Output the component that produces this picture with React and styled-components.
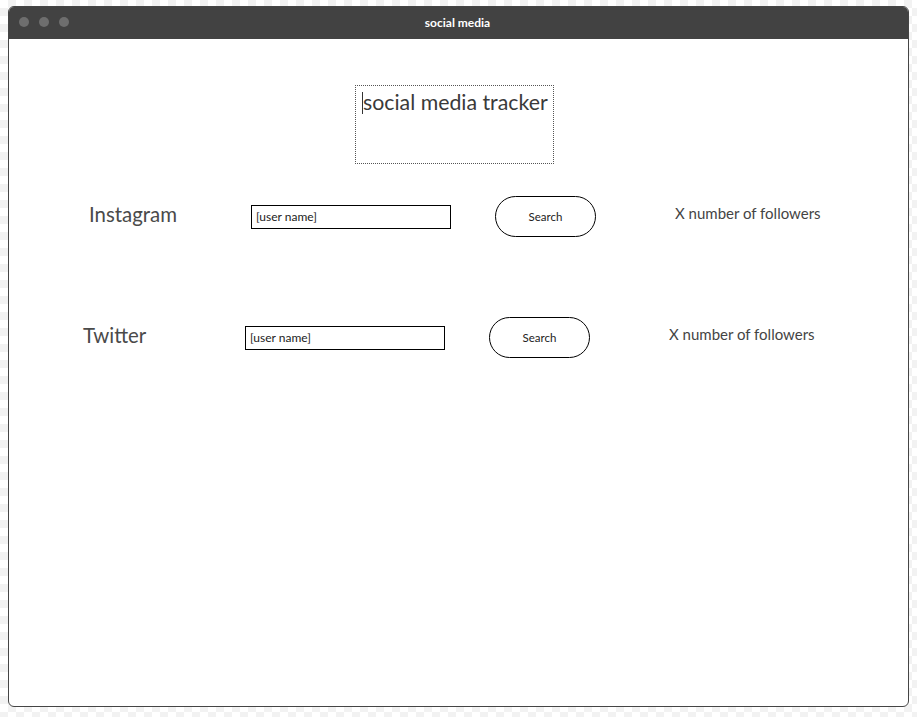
import React from 'react';
import styled, { createGlobalStyle } from 'styled-components';

const GlobalStyle = createGlobalStyle`
  html, body {
    margin: 0;
    padding: 0;
  }
  body {
    width: 917px;
    height: 717px;
    overflow: hidden;
    font-family: Lato, "Liberation Sans", sans-serif;
    background: repeating-conic-gradient(#f2f2f2 0% 25%, #ffffff 0% 50%) 0 0 / 16px 16px;
  }
`;

const Page = styled.div`
  padding: 6px 8px 10px 8px;
  box-sizing: border-box;
  height: 717px;
`;

const Window = styled.div`
  width: 901px;
  height: 701px;
  box-sizing: border-box;
  background: #fff;
  border: 1.5px solid #454545;
  border-radius: 6px;
  overflow: hidden;
  display: flex;
  flex-direction: column;
`;

const TitleBar = styled.div`
  height: 32px;
  flex-shrink: 0;
  background: #424242;
  position: relative;
  display: flex;
  align-items: center;
  justify-content: center;
`;

const Dots = styled.div`
  position: absolute;
  left: 10px;
  top: 10px;
  display: flex;
  gap: 10px;
`;

const Dot = styled.span`
  width: 10px;
  height: 10px;
  border-radius: 50%;
  background: #6e6e6e;
`;

const WindowTitle = styled.div`
  color: #fff;
  font-weight: bold;
  font-size: 12px;
  margin-left: -2px;
  margin-top: -2px;
`;

const Content = styled.div`
  flex: 1;
  padding-top: 46px;
`;

const Heading = styled.div`
  margin-left: 346px;
  width: 199px;
  height: 79px;
  box-sizing: border-box;
  border: 1px dotted #555;
  padding: 5px 0 0 6px;
  display: flex;
  align-items: flex-start;
`;

const Caret = styled.span`
  width: 1px;
  height: 22px;
  background: #333;
  margin-top: 1px;
`;

const HeadingText = styled.span`
  font-size: 21.3px;
  color: #3a3a3a;
  line-height: 22px;
`;

const Rows = styled.div`
  display: flex;
  flex-direction: column;
  gap: 80px;
  margin-top: 32px;
`;

const Row = styled.div`
  display: flex;
  align-items: center;
  height: 41px;
  padding-left: ${p => p.$offset}px;
`;

const Label = styled.div`
  width: 162px;
  font-size: 20.4px;
  color: #4a4a4a;
  margin-top: -6px;
`;

const UserInput = styled.input`
  width: 200px;
  height: 24px;
  box-sizing: border-box;
  border: 1px solid #000;
  font-family: inherit;
  font-size: 12px;
  padding: 0 4px;
  outline: none;
  &::placeholder {
    color: #222;
  }
`;

const SearchButton = styled.button`
  margin-left: 44px;
  width: 101px;
  height: 41px;
  border: 1px solid #000;
  border-radius: 21px;
  background: #fff;
  font-family: inherit;
  font-size: 11.5px;
  color: #222;
  cursor: pointer;
`;

const Followers = styled.div`
  margin-left: 79px;
  font-size: 15px;
  color: #444;
  margin-top: -7px;
`;

const networks = [
  { name: 'Instagram', offset: 80 },
  { name: 'Twitter', offset: 74 },
];

export default function App() {
  return (
    <>
      <GlobalStyle />
      <Page>
        <Window>
          <TitleBar>
            <Dots>
              <Dot />
              <Dot />
              <Dot />
            </Dots>
            <WindowTitle>social media</WindowTitle>
          </TitleBar>
          <Content>
            <Heading>
              <Caret />
              <HeadingText>social media tracker</HeadingText>
            </Heading>
            <Rows>
              {networks.map(n => (
                <Row key={n.name} $offset={n.offset}>
                  <Label>{n.name}</Label>
                  <UserInput placeholder="[user name]" />
                  <SearchButton>Search</SearchButton>
                  <Followers>X number of followers</Followers>
                </Row>
              ))}
            </Rows>
          </Content>
        </Window>
      </Page>
    </>
  );
}
